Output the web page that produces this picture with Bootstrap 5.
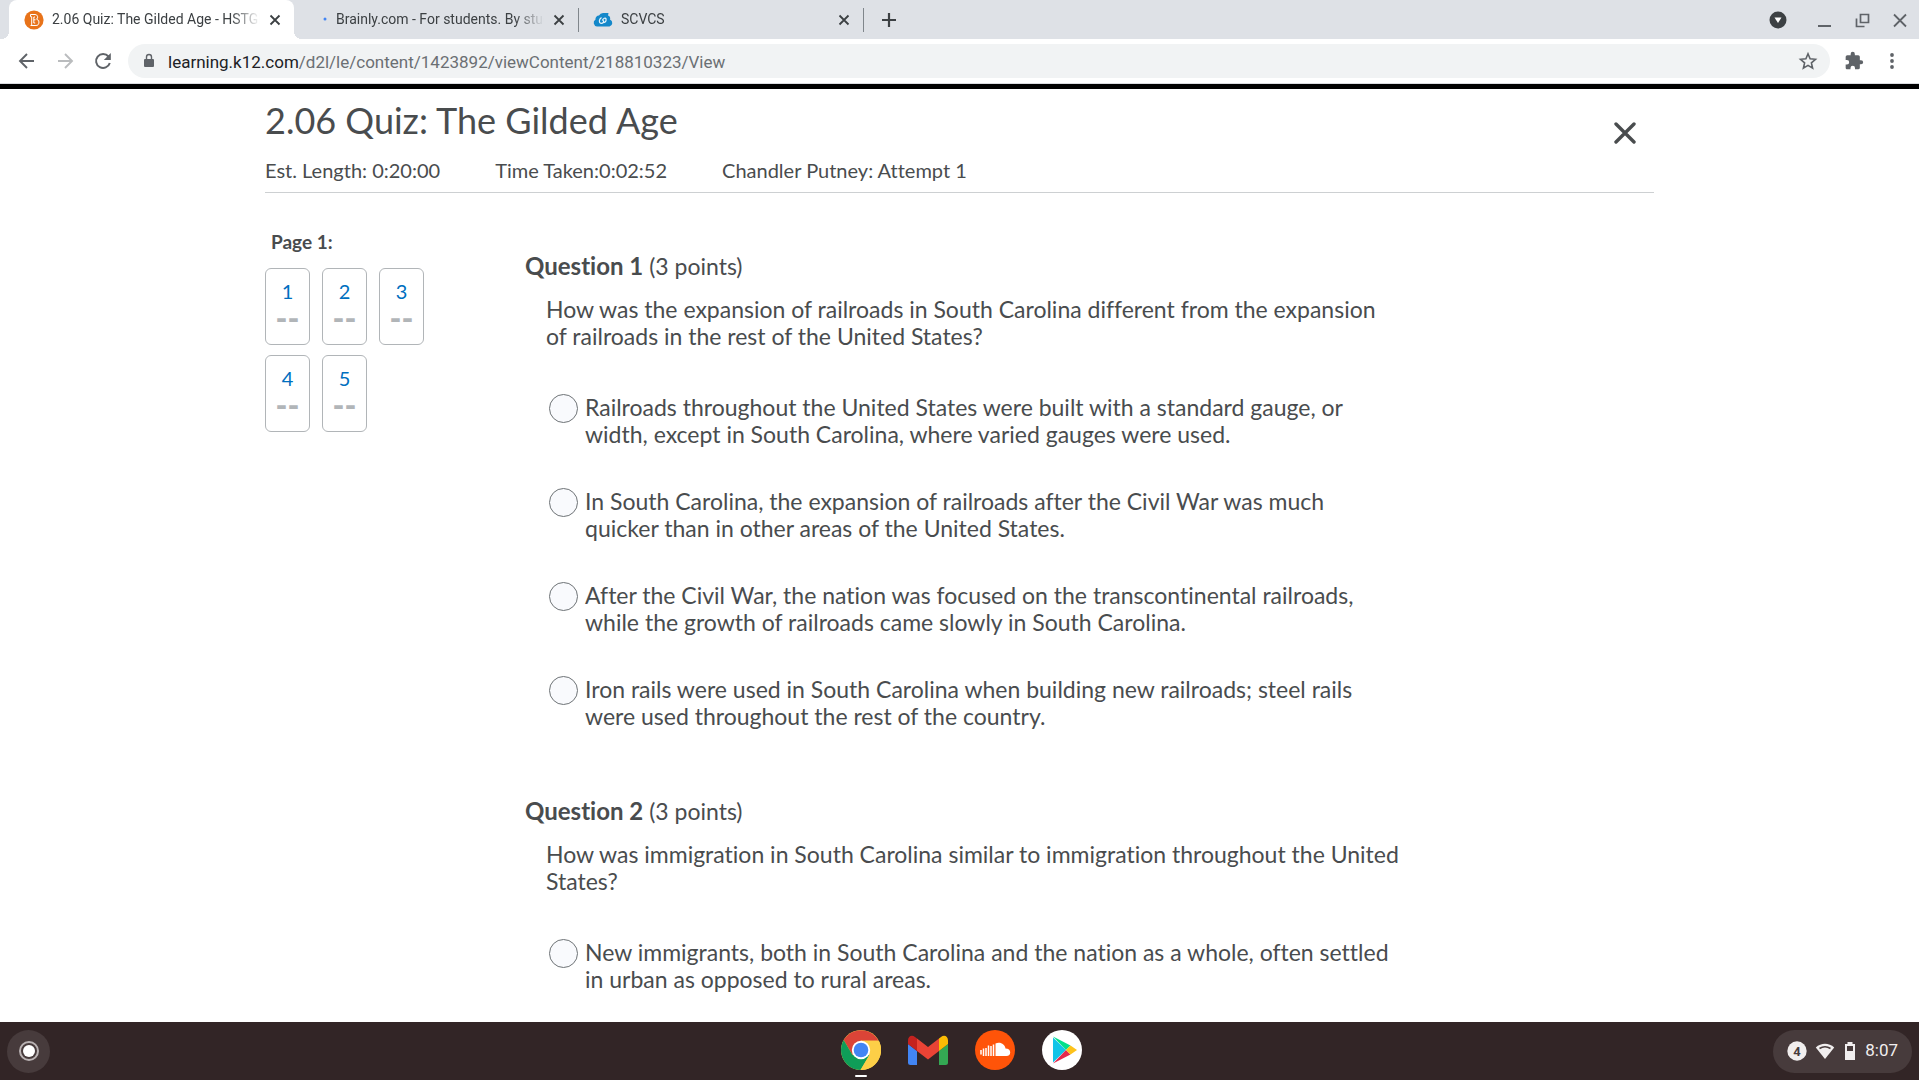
<!DOCTYPE html>
<html lang="en">
<head>
<meta charset="utf-8">
<meta name="viewport" content="width=device-width, initial-scale=1">
<title>2.06 Quiz: The Gilded Age</title>
<link href="https://cdn.jsdelivr.net/npm/bootstrap@5.3.0/dist/css/bootstrap.min.css" rel="stylesheet">
<style>
  body { font-family: Lato, "Liberation Sans", sans-serif; color: #494c4e; background: #fff; font-variant-ligatures: none; }
  .chrome-ui { font-family: Roboto, "Liberation Sans", sans-serif; }
  .icon-btn { background: none; border: 0; padding: 0; display: inline-flex; align-items: center; justify-content: center; color: #5f6368; flex: none; }
  .icon-btn svg, .shelf svg { display: block; }

  /* tab strip */
  .tab-strip { background: #dee1e6; height: 39px; padding-left: 9px; }
  .browser-tab { position: relative; height: 39px; width: 284px; padding: 0 9px 0 14px; font-size: 14px; color: #3c4043; flex: none; }
  .browser-tab .tab-title { flex: 1 1 0; min-width: 0; overflow: hidden; white-space: nowrap; color: inherit; text-decoration: none; margin: 0 5px 0 8px; -webkit-mask-image: linear-gradient(90deg, #000 86%, transparent 100%); mask-image: linear-gradient(90deg, #000 86%, transparent 100%); }
  .browser-tab .icon-btn { color: #3c4043; width: 20px; height: 20px; }
  .browser-tab.current { width: 285px; padding-left: 15px; background: #fff; border-radius: 8px 8px 0 0; }
  .browser-tab.current::before, .browser-tab.current::after { content: ""; position: absolute; bottom: 0; width: 8px; height: 8px; }
  .browser-tab.current::before { left: -8px; background: radial-gradient(circle at 0 0, transparent 8px, #fff 8px); }
  .browser-tab.current::after { right: -8px; background: radial-gradient(circle at 100% 0, transparent 8px, #fff 8px); }
  .tab-line { width: 1px; height: 24px; background: #80868b; flex: none; }
  .window-buttons { gap: 18px; padding-right: 9px; }

  /* address bar */
  .tool-row { height: 45px; padding: 0 17px 1px 17px; gap: 18px; border-bottom: 1px solid #dadce0; }
  .tool-row .icon-btn { width: 20px; height: 20px; }
  .address { background: #f1f3f4; border-radius: 17px; height: 34px; padding: 0 12px; margin: 0 -4px 0 -3px; }
  .address a { font-size: 17px; color: #6b6f73; text-decoration: none; white-space: nowrap; }
  .address a span { color: #202124; }
  .page-top { height: 5px; background: #000; }

  /* quiz */
  .quiz { max-width: 1389px; width: 100%; }
  .quiz-head { height: 104px; border-bottom: 1px solid #cdd0d2; padding-top: 9px; }
  .quiz-head h1 { font-size: 36px; line-height: 44px; font-weight: 400; margin: 0 0 16px; color: #494c4e; }
  .quiz-meta { font-size: 20px; line-height: 24px; gap: 55px; }
  .quiz-nav { width: 260px; padding-top: 36px; flex: none; }
  .quiz-nav h2 { font-size: 19px; line-height: 26px; font-weight: 700; margin: 0 0 13px 6px; }
  .pages { width: 159px; gap: 10px 12px; }
  .page-box { width: 45px; height: 77px; border: 1px solid #b1b5b8; border-radius: 6px; text-decoration: none; color: #006fbf; font-size: 20px; line-height: 26px; padding-top: 9px; }
  .page-box b { color: #b1b5b8; font-weight: 900; font-size: 32px; line-height: 28px; }
  .questions { padding-top: 57px; }
  .question { font-size: 23px; line-height: 27px; border: 0; padding: 0; margin: 0 0 25px; }
  .question legend { font-size: 23px; line-height: 32px; margin: 0 0 14px; float: none; }
  .question legend strong { font-size: 24px; }
  .question p { margin: 0 0 44px 21px; }
  .answer { margin: 0 0 40px 24px; gap: 7px; }
  .answer .form-check-input { width: 29px; height: 29px; margin: 0; background-color: #f9fafd; border: 1px solid #6e7376; flex: none; }

  /* shelf */
  .shelf { position: relative; height: 58px; background: #322526; padding: 0 7px; }
  .launcher { width: 43px; height: 43px; border-radius: 50%; background: #473b3c; }
  .shelf-apps { position: absolute; left: 0; right: 0; top: 8px; padding-left: 3px; gap: 27px; }
  .app-on::after { content: ""; position: absolute; left: 14px; top: 45px; width: 12px; height: 2px; border-radius: 1px; background: #fff; }
  .tray { height: 43px; border-radius: 22px; background: #473b3c; color: #f1eeee; font-size: 17px; padding: 0 14px; }
</style>
<script src="https://cdn.jsdelivr.net/npm/bootstrap@5.3.0/dist/js/bootstrap.bundle.min.js"></script>
</head>
<body class="vh-100 d-flex flex-column overflow-hidden">

<header class="chrome-ui flex-shrink-0">
  <nav class="tab-strip d-flex align-items-center" aria-label="Tabs">
    <div class="browser-tab current d-flex align-items-center">
      <svg width="20" height="20" viewBox="0 0 20 20"><circle cx="10" cy="10" r="9.6" fill="#e8731a"/><path d="M6.500 4.500h4.500a2.600 2.600 0 0 1 1.600 4.700a3.200 3.200 0 0 1-1.600 6.300H6.500M6.500 4.500v2.200h1.200v8.800M9.800 7h1.200M9.800 7v6h1.400M9.800 9.800h1.700" fill="none" stroke="#fff" stroke-width="1"/></svg>
      <a class="tab-title" href="#">2.06 Quiz: The Gilded Age - HSTGR</a>
      <button class="icon-btn" aria-label="Close tab"><svg width="12" height="12" viewBox="0 0 12 12"><path d="M1.500 1.500l9 9M10.500 1.500l-9 9" stroke="currentColor" stroke-width="1.800"/></svg></button>
    </div>
    <div class="browser-tab d-flex align-items-center">
      <svg width="20" height="20" viewBox="0 0 20 20"><circle cx="17" cy="9" r="1.500" fill="#4285f4"/></svg>
      <a class="tab-title" href="#">Brainly.com - For students. By students.</a>
      <button class="icon-btn" aria-label="Close tab"><svg width="12" height="12" viewBox="0 0 12 12"><path d="M1.500 1.500l9 9M10.500 1.500l-9 9" stroke="currentColor" stroke-width="1.800"/></svg></button>
    </div>
    <div class="tab-line"></div>
    <div class="browser-tab d-flex align-items-center">
      <svg width="20" height="20" viewBox="0 0 20 20"><path d="M4 16.500a3.800 3.800 0 0 1-1.500-7A3.500 3.500 0 0 1 6 5.500a4.600 4.600 0 0 1 4-2.500h5.500l-.5 2.500a3 3 0 0 1 2 4A3.700 3.700 0 0 1 16.500 16.500z" fill="#1488ca"/><path d="M8.500 7.500c-3 2-2.600 5.500-.5 5.900c2 .2 3.500-2 2-3M9.300 10.500c1-2.500 3.200-3 3.700-1.700c.4 2-1 3.500-2.500 3.900" fill="none" stroke="#e6f4fb" stroke-width="1.200"/></svg>
      <a class="tab-title" href="#">SCVCS</a>
      <button class="icon-btn" aria-label="Close tab"><svg width="12" height="12" viewBox="0 0 12 12"><path d="M1.500 1.500l9 9M10.500 1.500l-9 9" stroke="currentColor" stroke-width="1.800"/></svg></button>
    </div>
    <div class="tab-line"></div>
    <button class="icon-btn ms-3" aria-label="New tab"><svg width="20" height="20" viewBox="0 0 20 20"><path d="M9 3v14M2 10h14" stroke="#3c4043" stroke-width="2.200"/></svg></button>
    <div class="window-buttons d-flex align-items-center ms-auto">
      <button class="icon-btn me-2" aria-label="Search tabs"><svg width="20" height="20" viewBox="0 0 20 20"><circle cx="10" cy="10" r="8.500" fill="#3c4043"/><path d="M6.500 7.500h7L10 13z" fill="#fff"/></svg></button>
      <button class="icon-btn" aria-label="Minimize"><svg width="20" height="20" viewBox="0 0 20 20"><path d="M4 16h13" stroke="currentColor" stroke-width="2"/></svg></button>
      <button class="icon-btn" aria-label="Restore"><svg width="20" height="20" viewBox="0 0 20 20"><path d="M8.500 4.500h8v8h-8zM4.500 8.500v8h8" fill="none" stroke="currentColor" stroke-width="1.700"/></svg></button>
      <button class="icon-btn" aria-label="Close"><svg width="20" height="20" viewBox="0 0 20 20"><path d="M4 4.500l12 12M16 4.500l-12 12" stroke="currentColor" stroke-width="1.800"/></svg></button>
    </div>
  </nav>

  <div class="tool-row d-flex align-items-center">
    <button class="icon-btn" aria-label="Back"><svg width="20" height="20" viewBox="0 0 20 20"><path d="M17 10H3M10 3l-7 7 7 7" fill="none" stroke="currentColor" stroke-width="1.900"/></svg></button>
    <button class="icon-btn" aria-label="Forward"><svg width="20" height="20" viewBox="0 0 20 20"><path d="M3 10h14M10 3l7 7-7 7" fill="none" stroke="#babcbe" stroke-width="1.900"/></svg></button>
    <button class="icon-btn" aria-label="Reload"><svg width="20" height="20" viewBox="0 0 20 20"><path d="M15.500 5.500A7 7 0 1 0 16.800 12" fill="none" stroke="currentColor" stroke-width="2"/><path d="M17.800 2v7h-7z" fill="currentColor"/></svg></button>
    <div class="address d-flex align-items-center flex-grow-1">
      <svg width="16" height="18" viewBox="0 0 16 18" class="me-2"><path d="M5 7h8a1 1 0 0 1 1 1v6a1 1 0 0 1-1 1H5a1 1 0 0 1-1-1V8a1 1 0 0 1 1-1z" fill="#5f6368"/><path d="M6.500 7.500V5a2.500 2.500 0 0 1 5 0v2.500" fill="none" stroke="#5f6368" stroke-width="1.400"/></svg>
      <a href="#" class="ms-1 pt-1"><span>learning.k12.com</span>/d2l/le/content/1423892/viewContent/218810323/View</a>
      <button class="icon-btn ms-auto" aria-label="Bookmark"><svg width="20" height="20" viewBox="0 0 20 20"><path d="M10 2.800l2.100 5 5.400.500-4.100 3.600 1.200 5.300L10 14.400l-4.600 2.800 1.200-5.300-4.100-3.600 5.400-.500z" fill="none" stroke="currentColor" stroke-width="1.600"/></svg></button>
    </div>
    <button class="icon-btn" aria-label="Extensions"><svg width="20" height="20" viewBox="0 0 24 24"><path d="M20.500 11H19V7a2 2 0 0 0-2-2h-4V3.500a2.500 2.500 0 0 0-5 0V5H4a2 2 0 0 0-2 2v3.800h1.500a2.700 2.700 0 0 1 0 5.400H2V20c0 1.100.9 2 2 2h3.800v-1.500a2.700 2.700 0 0 1 5.400 0V22H17a2 2 0 0 0 2-2v-4h1.500a2.500 2.500 0 0 0 0-5z" fill="currentColor"/></svg></button>
    <button class="icon-btn" aria-label="Menu"><svg width="20" height="20" viewBox="0 0 20 20" fill="currentColor"><circle cx="10" cy="4" r="1.900"/><circle cx="10" cy="10" r="1.900"/><circle cx="10" cy="16" r="1.900"/></svg></button>
  </div>
  <div class="page-top"></div>
</header>

<main class="flex-grow-1 overflow-hidden">
  <div class="quiz mx-auto">
    <div class="quiz-head d-flex justify-content-between align-items-start">
      <div>
        <h1>2.06 Quiz: The Gilded Age</h1>
        <div class="quiz-meta d-flex"><span>Est. Length: 0:20:00</span><span>Time Taken:0:02:52</span><span>Chandler Putney: Attempt 1</span></div>
      </div>
      <button class="icon-btn my-4 me-3" aria-label="Close quiz"><svg width="26" height="26" viewBox="0 0 26 26"><path d="M4 2l18 18M22 2L4 20" stroke="#494c4e" stroke-width="3.400" stroke-linecap="round"/></svg></button>
    </div>
    <div class="d-flex">
      <aside class="quiz-nav">
        <h2>Page 1:</h2>
        <div class="pages d-flex flex-wrap">
          <a class="page-box d-flex flex-column align-items-center" href="#q1">1<b>--</b></a>
          <a class="page-box d-flex flex-column align-items-center" href="#q2">2<b>--</b></a>
          <a class="page-box d-flex flex-column align-items-center" href="#q3">3<b>--</b></a>
          <a class="page-box d-flex flex-column align-items-center" href="#q4">4<b>--</b></a>
          <a class="page-box d-flex flex-column align-items-center" href="#q5">5<b>--</b></a>
        </div>
      </aside>
      <form class="questions">
        <fieldset class="question" id="q1">
          <legend><strong>Question 1</strong> (3 points)</legend>
          <p>How was the expansion of railroads in South Carolina different from the expansion<br>of railroads in the rest of the United States?</p>
          <div class="answer d-flex"><input class="form-check-input" type="radio" name="q1" id="q1a"><label for="q1a">Railroads throughout the United States were built with a standard gauge, or<br>width, except in South Carolina, where varied gauges were used.</label></div>
          <div class="answer d-flex"><input class="form-check-input" type="radio" name="q1" id="q1b"><label for="q1b">In South Carolina, the expansion of railroads after the Civil War was much<br>quicker than in other areas of the United States.</label></div>
          <div class="answer d-flex"><input class="form-check-input" type="radio" name="q1" id="q1c"><label for="q1c">After the Civil War, the nation was focused on the transcontinental railroads,<br>while the growth of railroads came slowly in South Carolina.</label></div>
          <div class="answer d-flex"><input class="form-check-input" type="radio" name="q1" id="q1d"><label for="q1d">Iron rails were used in South Carolina when building new railroads; steel rails<br>were used throughout the rest of the country.</label></div>
        </fieldset>
        <fieldset class="question" id="q2">
          <legend><strong>Question 2</strong> (3 points)</legend>
          <p>How was immigration in South Carolina similar to immigration throughout the United<br>States?</p>
          <div class="answer d-flex"><input class="form-check-input" type="radio" name="q2" id="q2a"><label for="q2a">New immigrants, both in South Carolina and the nation as a whole, often settled<br>in urban as opposed to rural areas.</label></div>
        </fieldset>
      </form>
    </div>
  </div>
</main>

<footer class="shelf chrome-ui flex-shrink-0 d-flex align-items-center justify-content-between">
  <button class="icon-btn launcher" aria-label="Launcher"><svg width="22" height="22" viewBox="0 0 22 22"><circle cx="11" cy="11" r="9" fill="none" stroke="#b9b2b3" stroke-width="2"/><circle cx="11" cy="11" r="6" fill="#fff"/></svg></button>
  <div class="shelf-apps d-flex justify-content-center pe-none">
    <button class="icon-btn app-on position-relative pe-auto" aria-label="Chrome"><svg width="40" height="40" viewBox="0 0 40 40"><circle cx="20" cy="20" r="20" fill="#fbc94a"/><path d="M2.700 10A20 20 0 0 1 37.300 10.500H20L11.500 25z" fill="#db4437"/><path d="M2.700 10A20 20 0 0 0 19.500 40L28.500 24.700 11.500 25z" fill="#0f9d58"/><path d="M38 11H20v9l8.500 5L19.500 40A20 20 0 0 0 38 11z" fill="#fdcf47"/><circle cx="20" cy="20" r="9.200" fill="#fff"/><circle cx="20" cy="20" r="7.300" fill="#4285f4"/></svg></button>
    <button class="icon-btn pe-auto" aria-label="Gmail"><svg width="40" height="40" viewBox="0 0 40 40"><path d="M0 14l9 7v14H2.500A2.500 2.500 0 0 1 0 32.500z" fill="#4285f4"/><path d="M31 21l9-7v18.500a2.500 2.500 0 0 1-2.500 2.500H31z" fill="#34a853"/><path d="M9 8.500l11 8.500 11-8.500V21L20 29.500 9 21z" fill="#ea4335"/><path d="M31 8.500l2-1.500C36 4.500 40 6 40 10.500V14l-9 7z" fill="#fbbc04"/><path d="M9 8.500L7 7C4 4.500 0 6 0 10.500V14l9 7z" fill="#c5221f"/></svg></button>
    <button class="icon-btn pe-auto" aria-label="SoundCloud"><svg width="40" height="40" viewBox="0 0 40 40"><circle cx="20" cy="20" r="20" fill="#ff5409"/><path d="M20.500 13.500c5-2 9.500 1 10 5 3 0 4.700 1.500 4.700 3.700a3.800 3.800 0 0 1-3.800 3.800H20.500z" fill="#fff"/><path d="M18.500 14.500V26M16 16v10M13.500 15.500V26M11 18v8M8.500 18.500V26M6 20v4.500" stroke="#fff" stroke-width="1.500"/></svg></button>
    <button class="icon-btn pe-auto" aria-label="Play Store"><svg width="40" height="40" viewBox="0 0 40 40"><circle cx="20" cy="20" r="20" fill="#fff"/><path d="M11 7.500v25L24 20z" fill="#11c4e8"/><path d="M11 6.500L28.500 15.500 24 20z" fill="#00e08a"/><path d="M11 33.500l17.500-9L24 20z" fill="#e5294d"/><path d="M28.500 15.500l6.500 4.500-6.500 4.500L24 20z" fill="#fdc21b"/></svg></button>
  </div>
  <button class="tray border-0 d-flex align-items-center" aria-label="Status tray">
    <svg width="20" height="20" viewBox="0 0 20 20"><circle cx="10" cy="10" r="9.700" fill="#f1eeee"/><text x="10" y="14.500" text-anchor="middle" font-family="Roboto" font-weight="700" font-size="13" fill="#473b3c">4</text></svg>
    <svg class="ms-2" width="20" height="20" viewBox="0 0 20 20"><path d="M.800 6.500C6 1.500 14 1.500 19.200 6.500L10 18z" fill="#f1eeee"/><path d="M4.500 7.500C8 5.200 12 5.200 15.500 7.500" fill="none" stroke="#473b3c" stroke-width="1.500"/></svg>
    <svg class="ms-2 me-2" width="14" height="18" viewBox="0 0 14 18"><path d="M4.500 0h5v2H12v16H2V2h2.500z" fill="#f1eeee"/><path d="M4 4h6v5H4z" fill="#473b3c"/></svg>
    <span>8:07</span>
  </button>
</footer>
</body>
</html>
